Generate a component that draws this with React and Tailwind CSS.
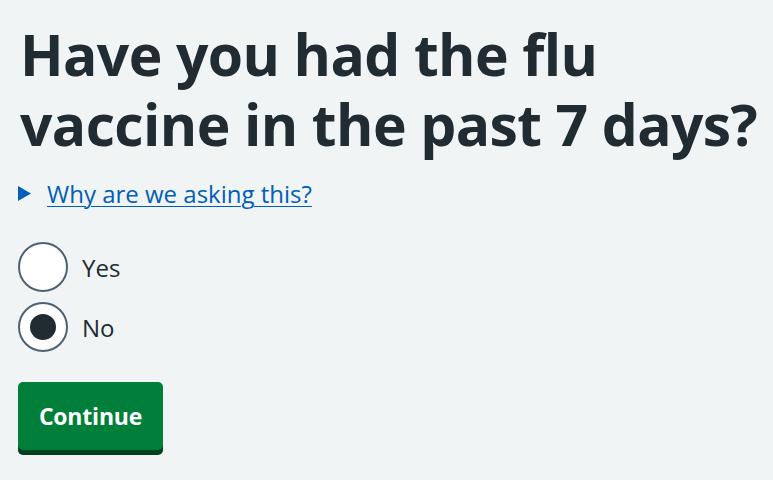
export default function App() {
  const font = { fontFamily: '"Open Sans", "Noto Sans", Arial, sans-serif' };
  return (
    <div className="min-h-[480px] w-full overflow-hidden bg-[#f0f4f5] pl-5 pt-[19px] text-[#212b32]" style={font}>
      <h1 className="m-0 whitespace-nowrap text-[57px] font-bold leading-[70px] tracking-[-0.6px]">
        Have you had the flu<br />vaccine in the past 7 days?
      </h1>
      <div className="mt-[17px] flex h-[35px] items-center text-[24px] leading-[35px]">
        <svg width="15" height="15" viewBox="0 0 15 15" className="ml-[-3px] mr-[15px]">
          <polygon points="1,0 14,7.5 1,15" fill="#005eb8" />
        </svg>
        <a href="#" className="text-[#005eb8] underline decoration-1 underline-offset-[3px]">
          Why are we asking this?
        </a>
      </div>
      <div className="mt-[31px] flex flex-col gap-[10px]">
        <label className="flex items-center">
          <span className="ml-[-2px] h-[50px] w-[50px] rounded-full border-2 border-[#4c6272] bg-white"></span>
          <span className="ml-[14px] text-[24px] leading-[35px]">Yes</span>
        </label>
        <label className="flex items-center">
          <span className="ml-[-2px] flex h-[50px] w-[50px] items-center justify-center rounded-full border-2 border-[#4c6272] bg-white">
            <span className="h-[26px] w-[26px] rounded-full bg-[#212b32]"></span>
          </span>
          <span className="ml-[14px] text-[24px] leading-[35px]">No</span>
        </label>
      </div>
      <button className="mt-[30px] ml-[-2px] flex h-[68px] w-[145px] items-center justify-center rounded-[5px] bg-[#007f3b] text-[23px] font-bold tracking-[-0.2px] text-white shadow-[0_5px_0_#00401e]">
        Continue
      </button>
    </div>
  );
}
